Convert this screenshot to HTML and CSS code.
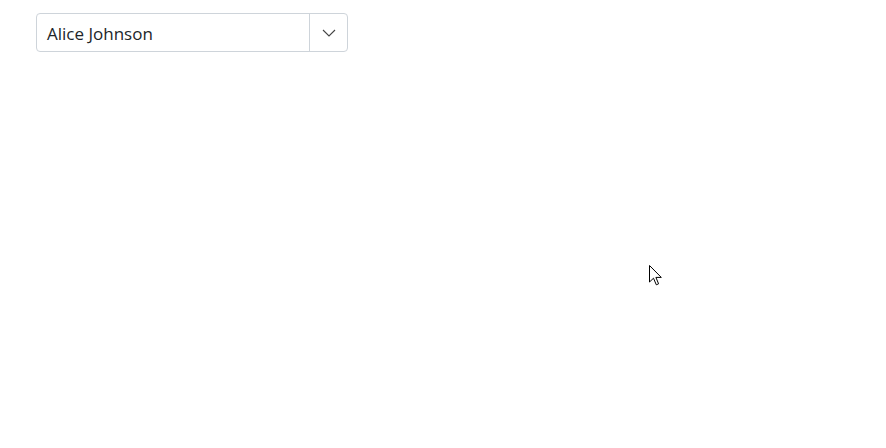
FILE: index.html
```html
<!DOCTYPE html>
<html>
<head>
<meta charset="utf-8">
<link rel="stylesheet" href="styles.css">
</head>
<body>
<div class="page">
  <div class="combo">
    <div class="combo-value">Alice Johnson</div>
    <div class="combo-button">
      <svg width="14" height="8" viewBox="0 0 14 8"><path d="M1 1 L7 7 L13 1" fill="none" stroke="#444" stroke-width="1.1"/></svg>
    </div>
  </div>
</div>
<svg class="cursor" width="14" height="24" viewBox="0 0 14 24">
  <path d="M0.5 0.5 L0.5 17 L4.5 13.2 L7.3 19.8 L9.6 18.8 L6.9 12.4 L12.3 12.4 Z" fill="#fff" stroke="#000" stroke-width="1" stroke-linejoin="miter"/>
</svg>
</body>
</html>
```
FILE: styles.css
```css
html, body {
  margin: 0;
  padding: 0;
  background: #fff;
}
body {
  width: 886px;
  height: 448px;
  position: relative;
  overflow: hidden;
  font-family: "Open Sans", "Noto Sans", sans-serif;
}
.page {
  padding: 13px 0 0 36px;
}
.combo {
  display: flex;
  width: 310px;
  height: 37px;
  border: 1px solid #ced4da;
  border-radius: 4px;
  box-sizing: content-box;
}
.combo-value {
  flex: 1;
  display: flex;
  align-items: center;
  padding-left: 10px;
  padding-top: 1px;
  font-size: 17px;
  color: #212529;
}
.combo-button {
  width: 37px;
  border-left: 1px solid #ced4da;
  display: flex;
  align-items: center;
  justify-content: center;
}
.cursor {
  position: absolute;
  left: 649px;
  top: 265px;
}
```
